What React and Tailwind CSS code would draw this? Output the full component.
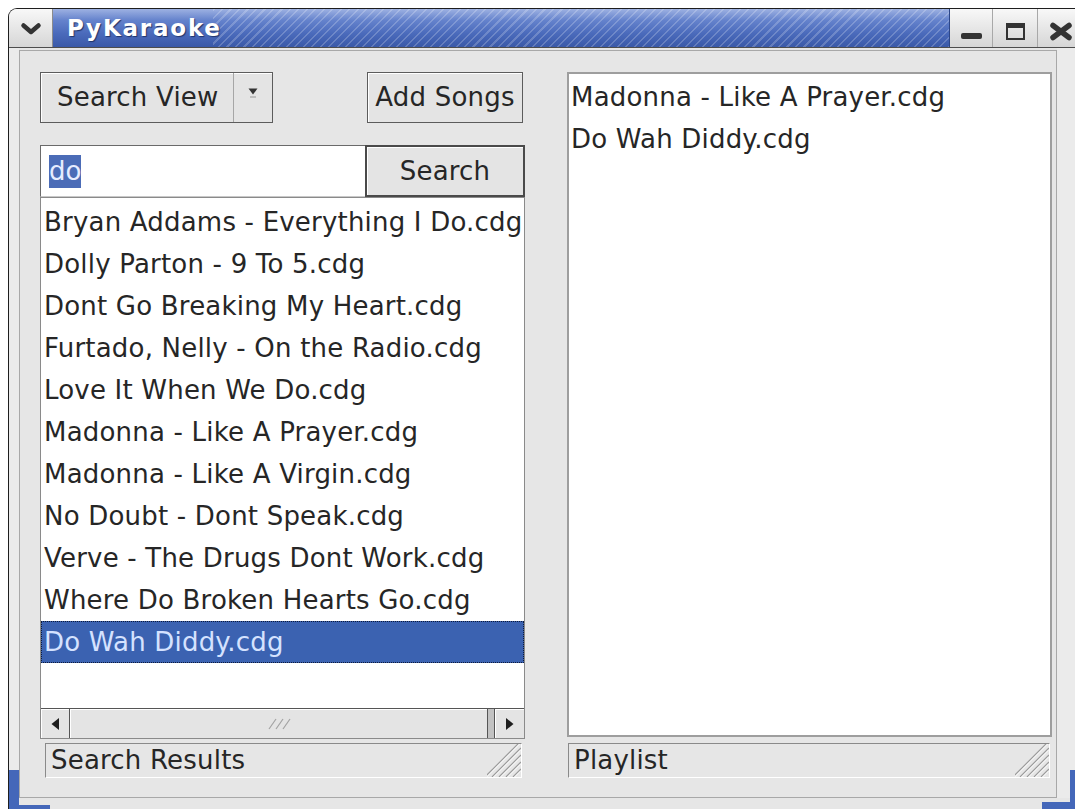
import React from "react";

const results = [
  "Bryan Addams - Everything I Do.cdg",
  "Dolly Parton - 9 To 5.cdg",
  "Dont Go Breaking My Heart.cdg",
  "Furtado, Nelly - On the Radio.cdg",
  "Love It When We Do.cdg",
  "Madonna - Like A Prayer.cdg",
  "Madonna - Like A Virgin.cdg",
  "No Doubt - Dont Speak.cdg",
  "Verve - The Drugs Dont Work.cdg",
  "Where Do Broken Hearts Go.cdg",
  "Do Wah Diddy.cdg",
];

const playlist = ["Madonna - Like A Prayer.cdg", "Do Wah Diddy.cdg"];

function ResizeGrip() {
  const offsets = [8, 15, 22, 29, 36];
  return (
    <svg width="34" height="33" viewBox="0 0 34 33" className="shrink-0 self-end">
      {offsets.map((k) => (
        <g key={k}>
          <line x1={34 - k} y1="33" x2="34" y2={33 - k} stroke="#9c9c9c" strokeWidth="1.3" />
          <line x1={35.5 - k} y1="33" x2="34" y2={34.5 - k} stroke="#ffffff" strokeWidth="1" />
        </g>
      ))}
    </svg>
  );
}

function StatusBar({ label, className }) {
  return (
    <div
      className={`h-[35px] flex items-stretch border-t border-l border-t-[#8a8a8a] border-l-[#8a8a8a] border-b border-r border-b-white border-r-white ${className}`}
    >
      <div className="flex-1 flex items-center pl-[5px] text-[26px] tracking-[0.2px] text-[#262626]">{label}</div>
      <ResizeGrip />
    </div>
  );
}

function TitleBar() {
  return (
    <div className="h-[39px] shrink-0 flex border-b border-[#4d4d4d]">
      <div className="w-[44px] flex items-start justify-center pt-[13px] bg-gradient-to-b from-[#f8f8f8] to-[#d6d6d6] border-r border-[#8c8c8c]">
        <svg width="22" height="14" viewBox="0 0 22 14">
          <path d="M3.5 3.5 L11 10 L18.5 3.5" fill="none" stroke="#333" strokeWidth="4.5" strokeLinecap="round" strokeLinejoin="round" />
        </svg>
      </div>
      <div className="w-[897px] flex items-center pl-[14px] bg-no-repeat bg-[image:repeating-linear-gradient(135deg,rgba(255,255,255,0.2)_0px,rgba(255,255,255,0.2)_1.5px,transparent_1.5px,transparent_6px),linear-gradient(to_bottom,#9db1e2_0%,#6482cc_30%,#4a6abb_65%,#3a59a8_100%)] [background-size:calc(100%-160px)_100%,100%_100%] [background-position:right_top,left_top] border-r border-[#2c4687]">
        <span className="text-white font-bold text-[23px] tracking-[1.8px] [text-shadow:1px_1px_1px_#20346a]">PyKaraoke</span>
      </div>
      <div className="w-[43px] flex items-start justify-center pt-[24px] bg-gradient-to-b from-[#f8f8f8] to-[#d6d6d6] border-r border-[#a8a8a8]">
        <div className="w-[21px] h-[6px] rounded-[2px] bg-[#333]" />
      </div>
      <div className="w-[45px] flex items-start justify-center pt-[14px] bg-gradient-to-b from-[#f8f8f8] to-[#d6d6d6] border-r border-[#a8a8a8]">
        <div className="w-[19px] h-[17px] border-[#333] border-t-[5px] border-x-[2.5px] border-b-[2.5px]" />
      </div>
      <div className="w-[50px] flex items-start pl-[11px] pt-[13px] bg-gradient-to-b from-[#f8f8f8] to-[#d6d6d6]">
        <svg width="24" height="19" viewBox="0 0 24 19">
          <path d="M4 3.5 L20 15.5 M20 3.5 L4 15.5" stroke="#333" strokeWidth="5.5" strokeLinecap="round" />
        </svg>
      </div>
    </div>
  );
}

function SearchPane() {
  return (
    <div className="w-[485px] flex flex-col shrink-0">
      <div className="h-[51px] flex">
        <div className="w-[233px] flex border border-[#5c5c5c] shadow-[inset_1px_1px_0_#ffffff] bg-[#e4e4e4]">
          <div className="w-[193px] flex items-center pl-[16px] text-[26px] tracking-[0.2px] text-[#262626] border-r border-[#a6a6a6]">Search View</div>
          <div className="flex-1 flex flex-col items-center pt-[13px]">
            <svg width="12" height="13" viewBox="0 0 12 13">
              <path d="M1.5 2.5 L10.5 2.5 L6 8.5 Z" fill="#333" />
              <line x1="3" y1="11" x2="9" y2="11" stroke="#b0b0b0" strokeWidth="1.5" />
            </svg>
          </div>
        </div>
        <div className="w-[156px] ml-auto mr-[2px] flex items-center justify-center border border-[#5c5c5c] shadow-[inset_1px_1px_0_#ffffff] bg-[#e4e4e4] text-[26px] tracking-[0.2px] text-[#262626]">
          Add Songs
        </div>
      </div>

      <div className="h-[52px] mt-[22px] flex">
        <div className="w-[325px] flex items-center pl-[8px] bg-white border-t border-l border-[#6a6a6a] border-b border-b-[#c8c8c8]">
          <span className="bg-[#4b6cb7] text-[#e6ecff] text-[26px] leading-[33px]">do</span>
        </div>
        <div className="flex-1 flex items-center justify-center border-2 border-[#4a4a4a] shadow-[inset_1px_1px_0_#ffffff] bg-[#e4e4e4] text-[26px] tracking-[0.2px] text-[#262626]">
          Search
        </div>
      </div>

      <div className="h-[542px] flex flex-col border border-[#8a8a8a] bg-white">
        <div className="flex-1 pt-[3px] overflow-hidden">
          {results.map((song, i) => {
            const selected = i === results.length - 1;
            return (
              <div
                key={song}
                className={`h-[42px] flex items-center whitespace-nowrap text-[26px] tracking-[0.2px] ${
                  selected
                    ? "bg-[#3b62b1] text-[#d5e2ff] border border-dotted border-[#0d1a3a] pl-[2px]"
                    : "text-[#262626] pl-[3px]"
                }`}
              >
                {song}
              </div>
            );
          })}
        </div>
        <div className="h-[30px] flex border-t border-[#555] bg-[#e4e4e4]">
          <div className="w-[29px] flex items-center justify-center border-r border-[#555] shadow-[inset_1px_1px_0_#ffffff]">
            <svg width="11" height="14" viewBox="0 0 11 14"><path d="M9 1 L1.5 7 L9 13 Z" fill="#1e1e1e" /></svg>
          </div>
          <div className="flex-1 flex items-center justify-center border-r border-[#555] shadow-[inset_1px_1px_0_#ffffff]">
            <svg width="28" height="14" viewBox="0 0 28 14">
              {[4, 11, 18].map((x) => (
                <line key={x} x1={x} y1="12" x2={x + 7} y2="2" stroke="#a2a2a2" strokeWidth="1.2" />
              ))}
            </svg>
          </div>
          <div className="w-[7px] bg-[#c2c2c2] border-r border-[#555]" />
          <div className="w-[29px] flex items-center justify-center shadow-[inset_1px_1px_0_#ffffff]">
            <svg width="11" height="14" viewBox="0 0 11 14"><path d="M2 1 L9.5 7 L2 13 Z" fill="#1e1e1e" /></svg>
          </div>
        </div>
      </div>

      <StatusBar label="Search Results" className="mt-[4px] ml-[5px] mr-[3px]" />
    </div>
  );
}

function PlaylistPane() {
  return (
    <div className="w-[485px] ml-[42px] flex flex-col shrink-0">
      <div className="h-[665px] bg-white border-2 border-[#9e9e9e] pt-[2px]">
        {playlist.map((song) => (
          <div key={song} className="h-[42px] flex items-center pl-[2px] whitespace-nowrap text-[26px] tracking-[0.2px] text-[#262626]">
            {song}
          </div>
        ))}
      </div>
      <StatusBar label="Playlist" className="mt-[6px] ml-[1px] mr-[2px]" />
    </div>
  );
}

export default function App() {
  return (
    <div className="w-[1075px] h-[809px] overflow-hidden bg-white pt-[8px] pl-[8px] font-['DejaVu_Sans',sans-serif] text-[#262626]">
      <div className="w-[1080px] h-[801px] flex flex-col bg-[#e6e6e6] border-l border-t border-[#1e1e1e] rounded-tl-[9px] overflow-hidden">
        <TitleBar />
        <div className="flex-1 flex flex-col">
          <div className="flex-1 flex">
            {/* left window frame */}
            <div className="w-[10px] flex flex-col">
              <div className="flex-1 bg-[#ebebeb]" />
              <div className="h-[28px] bg-[#4467b9]" />
            </div>
            {/* client area */}
            <div className="w-[1038px] mt-[2px] border border-[#a8a8a8] bg-[#e6e6e6] flex items-start pl-[20px] pt-[21px]">
              <SearchPane />
              <PlaylistPane />
            </div>
            {/* right window frame */}
            <div className="flex-1 flex">
              <div className="w-[13px] bg-[#ebebeb]" />
              <div className="flex-1 flex flex-col">
                <div className="flex-1 bg-[#ebebeb]" />
                <div className="h-[28px] bg-[#4467b9]" />
              </div>
            </div>
          </div>
          {/* bottom window frame */}
          <div className="h-[11px] flex">
            <div className="w-[10px] bg-[#4467b9]" />
            <div className="w-[31px] flex flex-col">
              <div className="flex-1" />
              <div className="h-[4px] bg-[#4467b9]" />
            </div>
            <div className="flex-1" />
            <div className="w-[28px] flex flex-col">
              <div className="flex-1" />
              <div className="h-[7px] bg-[#4467b9]" />
            </div>
            <div className="w-[18px] bg-[#4467b9]" />
          </div>
        </div>
      </div>
    </div>
  );
}
